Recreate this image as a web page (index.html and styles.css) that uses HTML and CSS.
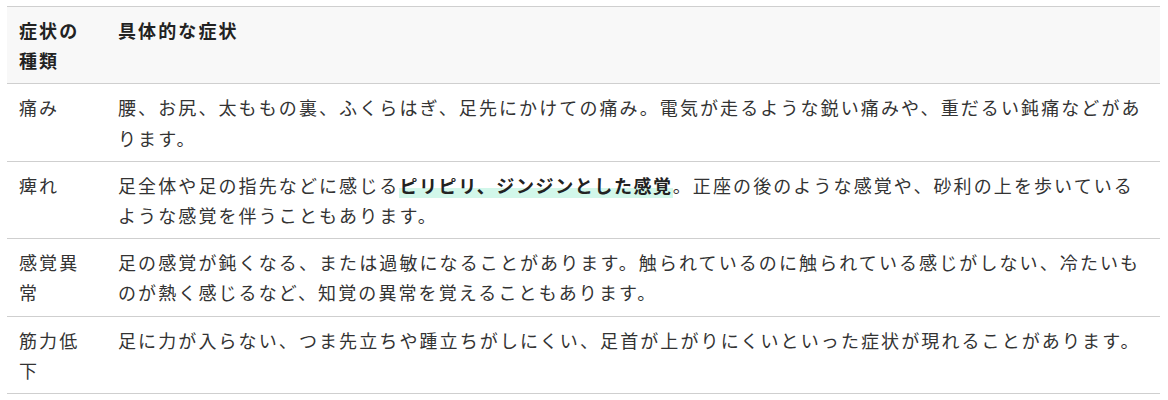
FILE: index.html
```html
<!DOCTYPE html>
<html lang="ja">
<head>
<meta charset="utf-8">
<link rel="stylesheet" href="styles.css">
</head>
<body>
<div class="wrap">
<table class="sym">
  <thead>
    <tr><th class="c1">症状の種類</th><th>具体的な症状</th></tr>
  </thead>
  <tbody>
    <tr><td class="c1">痛み</td><td>腰、お尻、太ももの裏、ふくらはぎ、足先にかけての痛み。電気が走るような鋭い痛みや、重だるい鈍痛などがあります。</td></tr>
    <tr><td class="c1">痺れ</td><td>足全体や足の指先などに感じる<strong class="mark">ピリピリ、ジンジンとした感覚</strong>。正座の後のような感覚や、砂利の上を歩いているような感覚を伴うこともあります。</td></tr>
    <tr><td class="c1">感覚異常</td><td>足の感覚が鈍くなる、または過敏になることがあります。触られているのに触られている感じがしない、冷たいものが熱く感じるなど、知覚の異常を覚えることもあります。</td></tr>
    <tr><td class="c1">筋力低下</td><td>足に力が入らない、つま先立ちや踵立ちがしにくい、足首が上がりにくいといった症状が現れることがあります。</td></tr>
  </tbody>
</table>
</div>
</body>
</html>
```

FILE: styles.css
```css
html, body {
  margin: 0;
  padding: 0;
  background: #fff;
}
.wrap {
  padding: 6px 8px 0 7px;
}
.sym {
  width: 100%;
  border-collapse: collapse;
  font-family: "Noto Sans CJK JP", "Noto Sans", sans-serif;
  font-size: 18px;
  line-height: 30.2px;
  letter-spacing: 2.1px;
  color: #333;
}
.sym th, .sym td {
  text-align: left;
  vertical-align: top;
  padding: 8px 12px;
  border-top: 1px solid #cfcfcf;
  border-bottom: 1px solid #cfcfcf;
}
.sym th {
  background: #f8f8f8;
  font-weight: 700;
  color: #222;
}
.sym .c1 {
  width: 75px;
}
.mark {
  font-weight: 700;
  letter-spacing: 1.6px;
  color: #222;
  background: linear-gradient(transparent 62%, #d2f7ea 62%);
}
```
